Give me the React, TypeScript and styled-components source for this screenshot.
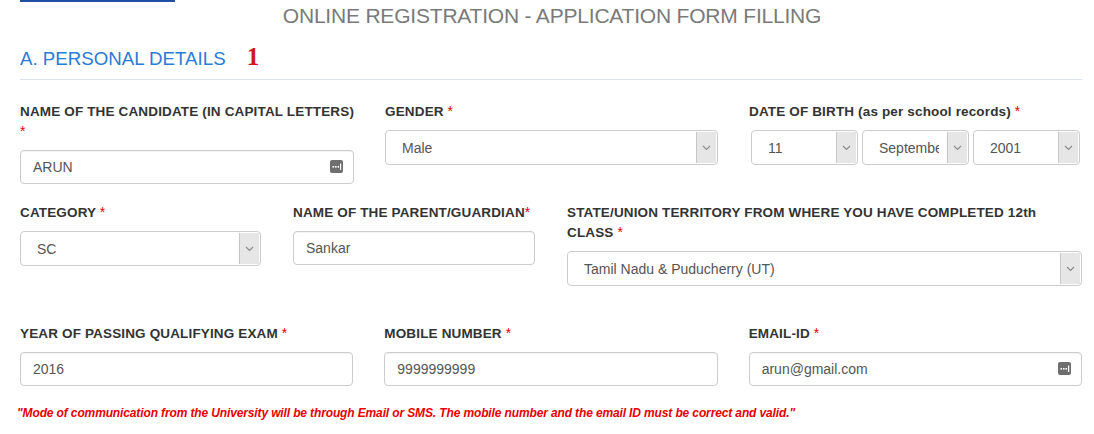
import styled, { createGlobalStyle } from "styled-components"

const GlobalStyle = createGlobalStyle`
  body {
    margin: 0;
    background: #fff;
    font-family: "Liberation Sans", Arial, sans-serif;
  }
`

export default function App() {
  return (
    <>
      <GlobalStyle />
      <Page>
        <TabBar />
        <Title>ONLINE REGISTRATION - APPLICATION FORM FILLING</Title>
        <SectionHead>
          <span>A. PERSONAL DETAILS</span>
          <StepNo>1</StepNo>
        </SectionHead>

        <Row cols="repeat(3, 1fr)" top={22}>
          <Field>
            <Label>
              NAME OF THE CANDIDATE (IN CAPITAL LETTERS)
              <br />
              <Star>*</Star>
            </Label>
            <TextBox value="ARUN" icon />
          </Field>
          <Field>
            <Label>GENDER <Star>*</Star></Label>
            <SelectBox value="Male" />
          </Field>
          <Field>
            <Label>DATE OF BIRTH (as per school records) <Star>*</Star></Label>
            <DateRow>
              <SelectBox value="11" />
              <SelectBox value="September" />
              <SelectBox value="2001" />
            </DateRow>
          </Field>
        </Row>

        <Row cols="241px 242px 1fr" top={19} gap={32}>
          <Field>
            <Label>CATEGORY <Star>*</Star></Label>
            <SelectBox value="SC" />
          </Field>
          <Field>
            <Label>NAME OF THE PARENT/GUARDIAN<Star>*</Star></Label>
            <TextBox value="Sankar" />
          </Field>
          <Field>
            <Label>
              STATE/UNION TERRITORY FROM WHERE YOU HAVE COMPLETED 12th
              <br />
              CLASS <Star>*</Star>
            </Label>
            <SelectBox value="Tamil Nadu & Puducherry (UT)" />
          </Field>
        </Row>

        <Row cols="repeat(3, 1fr)" top={38}>
          <Field>
            <Label>YEAR OF PASSING QUALIFYING EXAM <Star>*</Star></Label>
            <TextBox value="2016" />
          </Field>
          <Field>
            <Label>MOBILE NUMBER <Star>*</Star></Label>
            <TextBox value="9999999999" />
          </Field>
          <Field>
            <Label>EMAIL-ID <Star>*</Star></Label>
            <TextBox value="arun@gmail.com" icon />
          </Field>
        </Row>

        <Note>
          "Mode of communication from the University will be through Email or SMS. The mobile number and the email ID must be correct and valid."
        </Note>
      </Page>
    </>
  )
}

function TextBox({ value, icon }: { value: string; icon?: boolean }) {
  return (
    <InputWrap>
      <Input defaultValue={value} readOnly />
      {icon && (
        <KeyIcon width="13" height="13" viewBox="0 0 13 13">
          <rect x="0" y="0" width="13" height="13" rx="2" fill="#6e6e6e" />
          <rect x="2.5" y="6" width="1.6" height="1.6" fill="#fff" />
          <rect x="5" y="6" width="1.6" height="1.6" fill="#fff" />
          <rect x="7.5" y="6" width="1.6" height="1.6" fill="#fff" />
          <rect x="10" y="3.5" width="1.2" height="6.5" fill="#fff" />
        </KeyIcon>
      )}
    </InputWrap>
  )
}

function SelectBox({ value }: { value: string }) {
  return (
    <Select>
      <SelectText>{value}</SelectText>
      <Arrow>
        <svg width="9" height="6" viewBox="0 0 9 6">
          <path d="M1 1 L4.5 4.5 L8 1" fill="none" stroke="#8a8a8a" strokeWidth="1.1" />
        </svg>
      </Arrow>
    </Select>
  )
}

const Page = styled.div`
  width: 1062px;
  margin: 0 0 0 20px;
`

const TabBar = styled.div`
  width: 155px;
  height: 2px;
  background: #1f4ea3;
`

const Title = styled.h2`
  margin: 2px 0 0;
  text-align: center;
  font-size: 21px;
  line-height: 24px;
  font-weight: 400;
  color: #7a7a7a;
  letter-spacing: -0.2px;
  padding-left: 2px;
`

const SectionHead = styled.div`
  display: flex;
  align-items: baseline;
  gap: 21px;
  margin-top: 20px;
  padding-bottom: 9px;
  border-bottom: 1px solid #dde4e9;
  font-size: 18.7px;
  line-height: 22px;
  color: #2a7bd5;
`

const StepNo = styled.span`
  font-family: "Liberation Serif", "Times New Roman", serif;
  font-weight: 700;
  font-size: 25px;
  line-height: 0;
  color: #d0181c;
`

const Row = styled.div<{ cols: string; top: number; gap?: number }>`
  display: grid;
  grid-template-columns: ${(p) => p.cols};
  column-gap: ${(p) => (p.gap ?? 31)}px;
  margin-top: ${(p) => p.top}px;
  align-items: start;
`

const Field = styled.div`
  display: flex;
  flex-direction: column;
`

const Label = styled.label`
  font-size: 13.5px;
  line-height: 20px;
  letter-spacing: 0.15px;
  white-space: nowrap;
  font-weight: 700;
  color: #333;
  margin-bottom: 8px;
`

const Star = styled.span`
  color: #e60000;
  font-weight: 400;
  font-size: 14px;
  line-height: 0;
`

const InputWrap = styled.div`
  position: relative;
`

const Input = styled.input`
  box-sizing: border-box;
  width: 100%;
  height: 34px;
  padding: 0 12px;
  border: 1px solid #ccc;
  border-radius: 4px;
  font-family: "Liberation Sans", Arial, sans-serif;
  font-size: 14px;
  color: #555;
  background: #fff;
  box-shadow: inset 0 1px 1px rgba(0, 0, 0, 0.05);
  outline: none;
`

const KeyIcon = styled.svg`
  position: absolute;
  right: 11px;
  top: 10px;
`

const DateRow = styled.div`
  display: grid;
  grid-template-columns: repeat(3, 1fr);
  gap: 4px;
  padding: 0 2px;
`

const Select = styled.div`
  box-sizing: border-box;
  height: 35px;
  display: flex;
  align-items: stretch;
  border: 1px solid #ccc;
  border-radius: 4px;
  background: #fff;
  overflow: hidden;
`

const SelectText = styled.span`
  flex: 1;
  min-width: 0;
  display: flex;
  align-items: center;
  margin: 0 8px 0 16px;
  font-size: 14px;
  color: #555;
  white-space: nowrap;
  overflow: hidden;
`

const Arrow = styled.span`
  width: 19px;
  margin: 1px 1px 1px 0;
  display: flex;
  align-items: center;
  justify-content: center;
  background: #e6e6e6;
  border-left: 1px solid #c6c6c6;
`

const Note = styled.p`
  margin: 19px 0 0 -3px;
  font-size: 12px;
  line-height: 17px;
  letter-spacing: -0.13px;
  font-weight: 700;
  font-style: italic;
  color: #e60000;
`
